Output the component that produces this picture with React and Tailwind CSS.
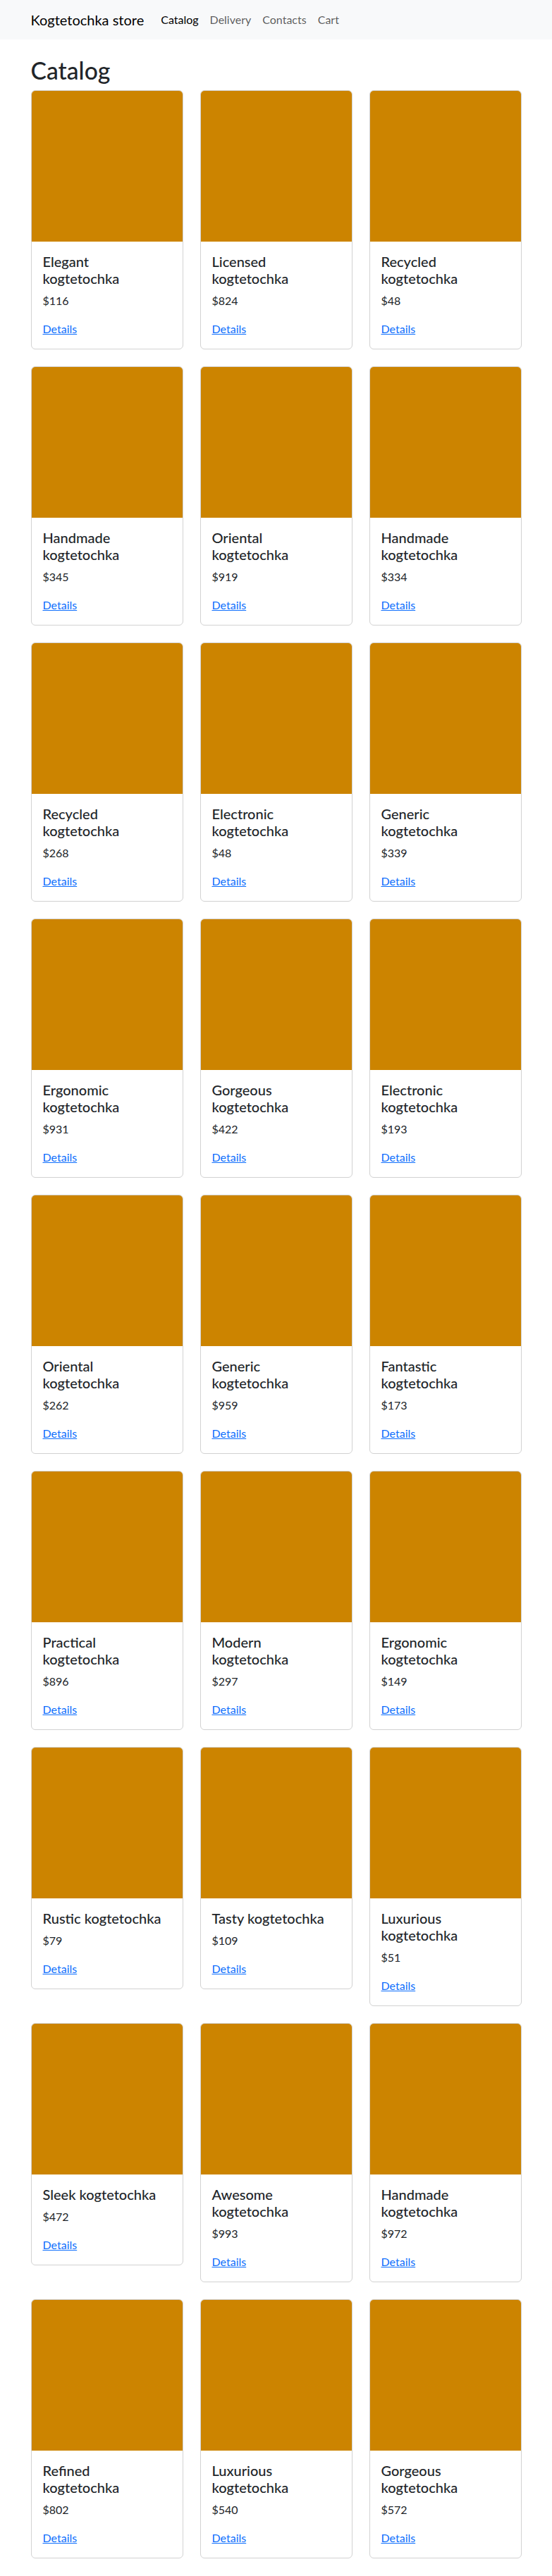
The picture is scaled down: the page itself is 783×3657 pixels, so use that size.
import React from "react";

const items = [
  ["Elegant", 116], ["Licensed", 824], ["Recycled", 48],
  ["Handmade", 345], ["Oriental", 919], ["Handmade", 334],
  ["Recycled", 268], ["Electronic", 48], ["Generic", 339],
  ["Ergonomic", 931], ["Gorgeous", 422], ["Electronic", 193],
  ["Oriental", 262], ["Generic", 959], ["Fantastic", 173],
  ["Practical", 896], ["Modern", 297], ["Ergonomic", 149],
  ["Rustic", 79, true], ["Tasty", 109, true], ["Luxurious", 51],
  ["Sleek", 472, true], ["Awesome", 993], ["Handmade", 972],
  ["Refined", 802], ["Luxurious", 540], ["Gorgeous", 572],
];

function Card({ name, price, one }) {
  return (
    <div className="flex flex-col border border-[#d2d2d2] rounded-[6px] bg-white">
      <div className="h-[214px] bg-[#cc8400] rounded-t-[5px]" />
      <div className="p-4">
        <h5 className={"text-[20px] font-medium leading-[24px] mb-2 text-[#212529] " + (one ? "whitespace-nowrap" : "")}>
          {one ? (
            name + " kogtetochka"
          ) : (
            <>
              {name}
              <br />
              kogtetochka
            </>
          )}
        </h5>
        <p className="text-base leading-6 mb-4">${price}</p>
        <a href="#" className="text-base leading-6 text-[#0d6efd] underline">
          Details
        </a>
      </div>
    </div>
  );
}

export default function App() {
  return (
    <div className="min-h-screen bg-white text-[#212529] font-['Lato',sans-serif]">
      <nav className="bg-[#f8f9fa] py-2">
        <div className="w-[720px] mx-auto px-3 flex items-center">
          <a href="#" className="text-[20px] leading-[30px] py-[5px] mr-4 text-black">
            Kogtetochka store
          </a>
          <div className="flex">
            <a href="#" className="px-2 py-2 text-base leading-6 text-black">Catalog</a>
            <a href="#" className="px-2 py-2 text-base leading-6 text-black/65">Delivery</a>
            <a href="#" className="px-2 py-2 text-base leading-6 text-black/65">Contacts</a>
            <a href="#" className="px-2 py-2 text-base leading-6 text-black/65">Cart</a>
          </div>
        </div>
      </nav>
      <main className="w-[720px] mx-auto px-3 py-6">
        <h1 className="text-[33.7px] font-medium leading-[1.2] mb-2">Catalog</h1>
        <div className="grid grid-cols-3 gap-6 items-start">
          {items.map(([n, p, one], i) => (
            <Card key={i} name={n} price={p} one={one} />
          ))}
        </div>
      </main>
    </div>
  );
}
